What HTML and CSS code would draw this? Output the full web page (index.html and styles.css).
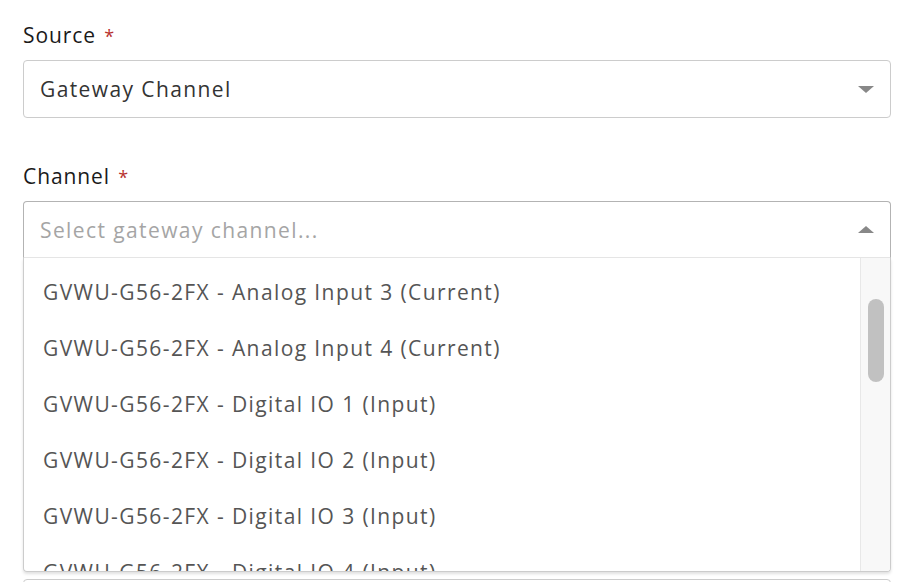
FILE: index.html
```html
<!DOCTYPE html>
<html lang="en">
<head>
    <meta charset="UTF-8">
    <meta name="viewport" content="width=device-width, initial-scale=1.0">
    <title>Gateway Channel</title>
    <link rel="stylesheet" href="styles.css">
</head>
<body>
    <div class="form">
        <div class="field">
            <label class="label">Source <span class="req">*</span></label>
            <div class="select">
                <span class="value">Gateway Channel</span>
                <span class="arrow down"></span>
            </div>
        </div>

        <div class="field">
            <label class="label">Channel <span class="req">*</span></label>
            <div class="select open">
                <span class="placeholder">Select gateway channel...</span>
                <span class="arrow up"></span>
            </div>
            <div class="menu">
                <ul class="options">
                    <li>GVWU-G56-2FX - Analog Input 3 (Current)</li>
                    <li>GVWU-G56-2FX - Analog Input 4 (Current)</li>
                    <li>GVWU-G56-2FX - Digital IO 1 (Input)</li>
                    <li>GVWU-G56-2FX - Digital IO 2 (Input)</li>
                    <li>GVWU-G56-2FX - Digital IO 3 (Input)</li>
                    <li>GVWU-G56-2FX - Digital IO 4 (Input)</li>
                </ul>
                <div class="track">
                    <div class="thumb"></div>
                </div>
            </div>
        </div>

        <div class="next"></div>
    </div>
</body>
</html>
```

FILE: styles.css
```css
* {
    margin: 0;
    padding: 0;
    box-sizing: border-box;
}
body {
    font-family: 'Open Sans', 'Liberation Sans', sans-serif;
    background: #fff;
    color: #222;
    overflow: hidden;
}
.form {
    width: 868px;
    margin-left: 23px;
    padding-top: 20px;
}
.field {
    margin-bottom: 43px;
}
.label {
    display: block;
    font-size: 21px;
    font-weight: 500;
    letter-spacing: 0.9px;
    line-height: 30px;
    margin-bottom: 9px;
    color: #1a1a1a;
}
.req {
    color: #b8312f;
    font-size: 18px;
    margin-left: 2px;
}
.select {
    height: 58px;
    border: 1px solid #ccc;
    border-radius: 4px;
    display: flex;
    align-items: center;
    justify-content: space-between;
    padding: 0 16px 0 16px;
    font-size: 21px;
    letter-spacing: 1.4px;
}
.value {
    color: #333;
}
.placeholder {
    color: #a5a5a5;
}
.arrow {
    width: 0;
    height: 0;
    border-left: 8px solid transparent;
    border-right: 8px solid transparent;
}
.arrow.down {
    border-top: 7px solid #888;
}
.arrow.up {
    border-bottom: 7px solid #888;
}
.select.open {
    height: 57px;
    border-radius: 4px 4px 0 0;
    border-color: #b3b3b3;
    border-bottom-color: #e6e6e6;
}
.menu {
    display: flex;
    height: 314px;
    border: 1px solid #ccc;
    border-top: none;
    border-radius: 0 0 4px 4px;
    box-shadow: 0 2px 3px rgba(0, 0, 0, 0.12);
    overflow: hidden;
    margin-bottom: -43px;
    position: relative;
}
.options {
    flex: 1;
    list-style: none;
    padding-top: 6px;
    overflow: hidden;
}
.options li {
    height: 56px;
    line-height: 56px;
    padding-left: 19px;
    font-size: 21px;
    letter-spacing: 1.4px;
    color: #555;
    white-space: nowrap;
}
.track {
    width: 30px;
    background: #f8f8f8;
    border-left: 1px solid #e8e8e8;
    padding: 41px 6px 0 7px;
}
.thumb {
    height: 83px;
    border-radius: 8px;
    background: #c1c1c1;
}
.next {
    margin-top: 50px;
    height: 40px;
    border: 1px solid #ccc;
    border-radius: 4px;
}
```
